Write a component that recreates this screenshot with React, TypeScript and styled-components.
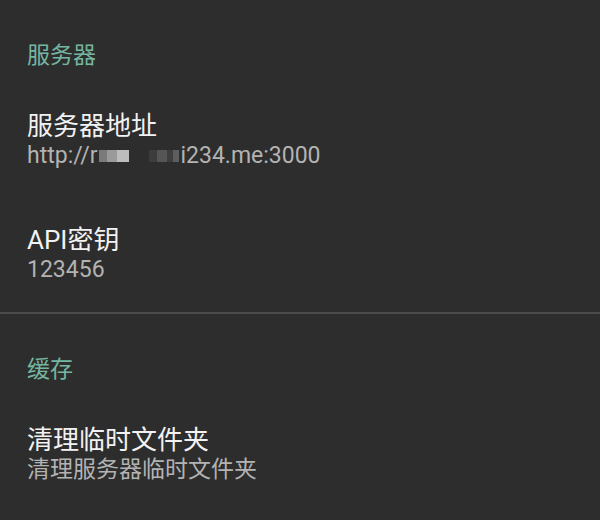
import React from "react";
import styled, { createGlobalStyle } from "styled-components";

const GlobalStyle = createGlobalStyle`
  html, body {
    margin: 0;
    padding: 0;
    background: #2d2d2d;
  }
  body {
    font-family: Roboto, "Noto Sans CJK SC", sans-serif;
  }
`;

const Screen = styled.div`
  width: 600px;
  height: 520px;
  overflow: hidden;
  background: #2d2d2d;
  display: flex;
  flex-direction: column;
`;

const Category = styled.section`
  display: flex;
  flex-direction: column;
  padding-top: 40px;
`;

const CategoryTitle = styled.div`
  padding: 0 27px;
  margin-bottom: 12px;
  font-size: 23px;
  line-height: 32px;
  color: #74b6a0;
`;

const Item = styled.div`
  display: flex;
  flex-direction: column;
  padding: 27px 27px;
`;

const Title = styled.div`
  font-size: 26px;
  line-height: 30px;
  color: #f2f2f2;
`;

const Summary = styled.div`
  font-size: 23px;
  line-height: 30px;
  color: #b3b3b3;
  display: flex;
  align-items: center;
  white-space: nowrap;
`;

const Divider = styled.div`
  height: 2px;
  background: #4b4b4b;
`;

const Redacted = styled.span`
  display: inline-flex;
  align-items: center;
  height: 20px;
  margin: 0 1px 0 2px;
  filter: blur(0.6px);
`;

const Block = styled.span<{ $w: number; $c: string }>`
  display: inline-block;
  width: ${p => p.$w}px;
  height: 12px;
  background: ${p => p.$c};
`;

export default function App() {
  return (
    <Screen>
      <GlobalStyle />
      <Category>
        <CategoryTitle>服务器</CategoryTitle>
        <Item>
          <Title>服务器地址</Title>
          <Summary>
            http://r
            <Redacted>
              <Block $w={8} $c="#7a7a7a" />
              <Block $w={10} $c="#9a9a9a" />
              <Block $w={12} $c="#bdbdbd" />
              <Block $w={20} $c="#2d2d2d" />
              <Block $w={8} $c="#3c3c3c" />
              <Block $w={10} $c="#555555" />
              <Block $w={6} $c="#3e3e3e" />
              <Block $w={6} $c="#5e5e5e" />
            </Redacted>
            i234.me:3000
          </Summary>
        </Item>
        <Item>
          <Title>API密钥</Title>
          <Summary>123456</Summary>
        </Item>
      </Category>
      <Divider />
      <Category>
        <CategoryTitle>缓存</CategoryTitle>
        <Item>
          <Title>清理临时文件夹</Title>
          <Summary>清理服务器临时文件夹</Summary>
        </Item>
      </Category>
    </Screen>
  );
}
